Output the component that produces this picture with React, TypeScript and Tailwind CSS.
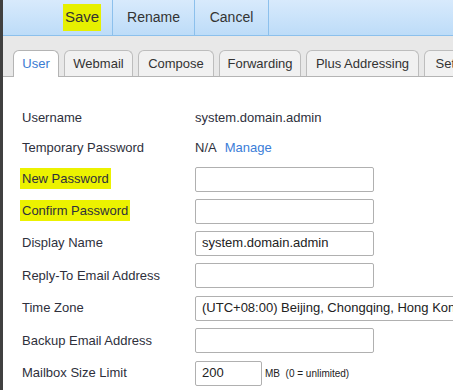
import React from "react";

const tabs = [
  { label: "User", w: "w-[46px]" },
  { label: "Webmail", w: "w-[69px]" },
  { label: "Compose", w: "w-[76px]" },
  { label: "Forwarding", w: "w-[82px]" },
  { label: "Plus Addressing", w: "w-[113px]" },
  { label: "Settings", w: "w-[70px]" },
];

function Field({ w = "w-[179px]", value = "" }: { w?: string; value?: string }) {
  return (
    <div className={`${w} h-[25px] shrink-0 rounded-[2px] border border-[#b0b0b0] bg-white px-[6px] flex items-center text-[13px] text-[#222] whitespace-nowrap overflow-hidden`}>
      {value}
    </div>
  );
}

function Row({ label, h = "h-[32px]", mark = false, children }: { label: string; h?: string; mark?: boolean; children?: React.ReactNode }) {
  return (
    <div className={`flex items-center ${h}`}>
      <div className="w-[173px] shrink-0">
        {mark ? (
          <span className="bg-[#ecf200] -mx-[2px] px-[2px] py-[3px]">{label}</span>
        ) : (
          label
        )}
      </div>
      <div className="flex items-center min-w-0">{children}</div>
    </div>
  );
}

export default function App() {
  return (
    <div className="flex h-[390px] w-[453px] overflow-hidden bg-white font-['Liberation_Sans',Arial,sans-serif] text-[#2e303c]">
      <div className="w-[3px] shrink-0 bg-[#404040]" />
      <div className="flex min-w-0 flex-1 flex-col">
        {/* toolbar */}
        <div className="flex h-[36px] shrink-0 border-b border-[#8cc0ec] bg-gradient-to-b from-[#d8eafc] to-[#bddcf8] pl-[49px] text-[14px] text-[#333]">
          <button className="flex w-[61px] items-center justify-center border-r border-[#8cc0ec]">
            <span className="bg-[#e6f000] -mx-[2px] px-[2px] py-[2px] text-[15px]">Save</span>
          </button>
          <button className="flex w-[82px] items-center justify-center border-r border-[#8cc0ec]">Rename</button>
          <button className="flex w-[74px] items-center justify-center border-r border-[#8cc0ec]">Cancel</button>
        </div>

        {/* tabs */}
        <div className="flex h-[41px] shrink-0 items-end gap-[5px] border-b border-[#b4b4b4] bg-[#e8e8e8] pl-[10px] whitespace-nowrap">
          {tabs.map((t, i) => (
            <div
              key={t.label}
              className={
                i === 0
                  ? `${t.w} -mb-px flex h-[27px] shrink-0 items-center justify-center rounded-t-[6px] border border-b-0 border-[#b4b4b4] bg-white text-[13px] text-[#3a7bd2]`
                  : `${t.w} flex h-[26px] shrink-0 items-center justify-center rounded-t-[6px] border border-b-0 border-[#bdbdbd] bg-[#f1f1f1] text-[13px] text-[#333]`
              }
            >
              {t.label}
            </div>
          ))}
        </div>

        {/* form */}
        <div className="flex flex-col pl-[19px] pt-[26px] text-[13px] whitespace-nowrap">
          <Row label="Username" h="h-[30px]">
            <span>system.domain.admin</span>
          </Row>
          <Row label="Temporary Password" h="h-[30px]">
            <span>N/A</span>
            <span className="ml-[8px] text-[#3b7dd8]">Manage</span>
          </Row>
          <Row label="New Password" mark>
            <Field />
          </Row>
          <Row label="Confirm Password" mark>
            <Field />
          </Row>
          <Row label="Display Name">
            <Field value="system.domain.admin" />
          </Row>
          <Row label="Reply-To Email Address" h="h-[33px]">
            <Field />
          </Row>
          <Row label="Time Zone">
            <Field w="w-[280px]" value="(UTC+08:00) Beijing, Chongqing, Hong Kong, Urumqi" />
          </Row>
          <Row label="Backup Email Address" h="h-[33px]">
            <Field />
          </Row>
          <Row label="Mailbox Size Limit">
            <Field w="w-[67px]" value="200" />
            <span className="ml-[3px] text-[10px] whitespace-pre text-[#222]">MB  (0 = unlimited)</span>
          </Row>
        </div>
      </div>
    </div>
  );
}
